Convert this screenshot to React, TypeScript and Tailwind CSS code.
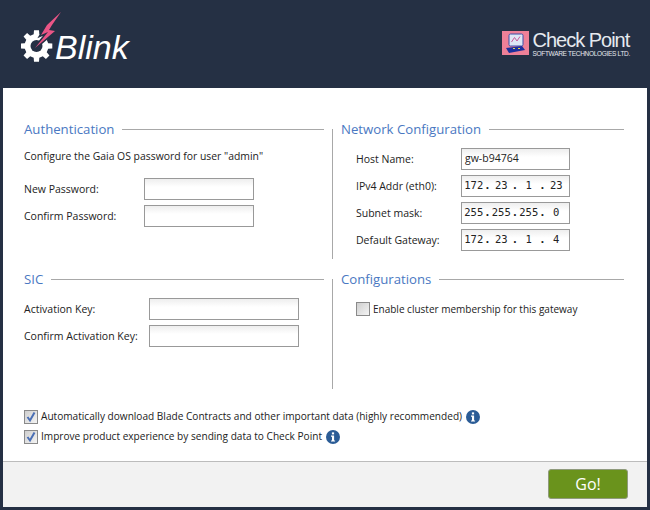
const ui = { fontFamily: '"Open Sans", "Noto Sans", sans-serif' };

function Title({ text }: { text: string }) {
  return (
    <div className="flex items-center gap-2 h-[18px]">
      <span className="text-[13.2px] leading-[18px] text-[#4a78c2] whitespace-nowrap">{text}</span>
      <div className="flex-1 h-px bg-[#a8a8a8]" />
    </div>
  );
}

const fieldClass =
  "h-[22px] border border-[#999999] bg-gradient-to-b from-[#eeeeee] to-[#ffffff] to-40%";

function Field({ label, w, lw }: { label: string; w: string; lw: string }) {
  return (
    <div className="flex items-center">
      <span className={`${lw} pt-[2px] text-[10.5px] text-[#222]`}>{label}</span>
      <div className={`${w} ${fieldClass}`} />
    </div>
  );
}

function Ip({ label, parts }: { label: string; parts: string[] }) {
  return (
    <div className="flex items-center">
      <span className="w-[105px] pt-[2px] text-[10.5px] text-[#222] whitespace-nowrap">{label}</span>
      <div className={`w-[109px] flex items-center ${fieldClass}`}>
        <div className="flex items-center -ml-[2px]">
          {parts.map((p, i) => (
            <div key={i} className="flex items-center text-[10.5px] shrink-0 text-[#222]" style={{ fontFamily: '"DejaVu Sans Mono", monospace' }}>
              <span className="w-[27.5px] text-center">{p}</span>
              {i < 3 && <span className="w-0 flex justify-center font-bold">.</span>}
            </div>
          ))}
        </div>
      </div>
    </div>
  );
}

function Check({ checked }: { checked?: boolean }) {
  return (
    <div className="w-[14px] h-[14px] border border-[#8a8a8a] bg-gradient-to-br from-[#cfcfcf] to-[#f4f4f4] flex items-center justify-center shrink-0">
      {checked && (
        <svg width="12" height="12" viewBox="0 0 12 12">
          <path d="M2.5 6 L5 9.5 L9.5 1.5" fill="none" stroke="#4a6fb5" strokeWidth="2" />
        </svg>
      )}
    </div>
  );
}

function Info() {
  return (
    <svg width="14" height="14" viewBox="0 0 14 14" className="shrink-0">
      <circle cx="7" cy="7" r="7" fill="#2b5c96" />
      <rect x="5.9" y="2.4" width="2.2" height="2" fill="#fff" />
      <path d="M5 5.6 H8.1 V10.4 H9.1 V11.5 H5 V10.4 H6 V6.7 H5 Z" fill="#fff" />
    </svg>
  );
}

function gearPath(cx: number, cy: number, rOut: number, rIn: number, teeth: number) {
  const pts: string[] = [];
  const step = (Math.PI * 2) / teeth;
  for (let i = 0; i < teeth; i++) {
    const a = i * step - Math.PI / 2;
    const d = step * 0.2;
    const d2 = step * 0.3;
    const list: [number, number][] = [
      [rIn, a - d2],
      [rOut, a - d],
      [rOut, a + d],
      [rIn, a + d2],
    ];
    for (const [r, t] of list) {
      pts.push(`${(cx + r * Math.cos(t)).toFixed(2)} ${(cy + r * Math.sin(t)).toFixed(2)}`);
    }
  }
  return `M${pts.join(" L")} Z`;
}

function BlinkLogo() {
  const bolt = "M40 12 L26 25 L20 35 L27 32 L14 48 L34 31 L28 30 L31 25 Z";
  return (
    <svg width="50" height="62" viewBox="0 0 50 62">
      <path d={gearPath(15.5, 46, 16, 12, 8)} fill="#fff" />
      <circle cx="15.5" cy="46" r="6" fill="#253044" />
      <path d={bolt} fill="#253044" stroke="#253044" strokeWidth="3" />
      <path d={bolt} fill="#ea5586" />
    </svg>
  );
}

function CheckPointLogo() {
  return (
    <div className="flex items-start gap-[3px]">
      <div className="w-[27px] h-[24px] bg-[#ee8098] flex items-center justify-center">
        <svg width="23" height="20" viewBox="0 0 23 20">
          <rect x="5" y="1" width="14" height="12" rx="1.5" fill="#dfe6f5" stroke="#3b4ea8" />
          <path d="M7.5 9 L10.5 4.5 L13 8 L16 3.5" stroke="#c85a9a" fill="none" />
          <path d="M2 15 L18 13 L21 17 L5 20 Z" fill="#1c2f9c" />
          <rect x="9" y="15" width="2" height="1" fill="#e8d44a" />
          <rect x="14" y="15" width="2" height="1" fill="#e8d44a" />
        </svg>
      </div>
      <div className="flex flex-col text-[#e6e9ef] -mt-[1px]" style={{ fontFamily: '"Liberation Sans", sans-serif' }}>
        <span className="text-[20px] leading-[20px] tracking-[-1px] whitespace-nowrap">Check Point</span>
        <span className="text-[6.5px] leading-[7px] tracking-[-0.3px] whitespace-nowrap">SOFTWARE TECHNOLOGIES LTD.</span>
      </div>
    </div>
  );
}

export default function App() {
  return (
    <div className="w-[650px] h-[510px] bg-[#253044] flex flex-col" style={ui}>
      <header className="h-[88px] shrink-0 flex justify-between pl-[21px] pr-[20px]">
        <div className="flex items-start">
          <BlinkLogo />
          <span className="-ml-[16px] mt-[26px] text-[34px] leading-[42px] italic text-white" style={{ fontFamily: '"Liberation Sans", sans-serif' }}>Blink</span>
        </div>
        <div className="pt-[31px]"><CheckPointLogo /></div>
      </header>
      <main className="mx-[3px] h-[419px] flex flex-col bg-white">
        <div className="flex-1 flex flex-col pt-[41px]">
          <div className="grid grid-cols-[329px_1fr] grid-rows-[130px_110px] gap-y-[20px]">
            <section className="pl-[21px] pr-[8px] -mt-[9px]">
              <Title text="Authentication" />
              <p className="mt-[10px] text-[10.4px] leading-[16px] text-[#222]">Configure the Gaia OS password for user "admin"</p>
              <div className="mt-[14px] flex flex-col gap-[5px]">
                <Field label="New Password:" lw="w-[120px]" w="w-[110px]" />
                <Field label="Confirm Password:" lw="w-[120px]" w="w-[110px]" />
              </div>
            </section>
            <section className="border-l border-[#a8a8a8] pl-[8px] pr-[23px]">
              <div className="-mt-[9px]"><Title text="Network Configuration" /></div>
              <div className="mt-[10px] pl-[15px] flex flex-col gap-[5px]">
                <div className="flex items-center">
                  <span className="w-[105px] pt-[2px] text-[10.5px] text-[#222]">Host Name:</span>
                  <div className={`w-[109px] flex items-center pl-[3px] text-[10.5px] text-[#222] ${fieldClass}`}>gw-b94764</div>
                </div>
                <Ip label="IPv4 Addr (eth0):" parts={["172", "23", "1", "23"]} />
                <Ip label="Subnet mask:" parts={["255", "255", "255", "0"]} />
                <Ip label="Default Gateway:" parts={["172", "23", "1", "4"]} />
              </div>
            </section>
            <section className="pl-[21px] pr-[8px] -mt-[9px]">
              <Title text="SIC" />
              <div className="mt-[10px] flex flex-col gap-[5px]">
                <Field label="Activation Key:" lw="w-[125px]" w="w-[150px]" />
                <Field label="Confirm Activation Key:" lw="w-[125px]" w="w-[150px]" />
              </div>
            </section>
            <section className="border-l border-[#a8a8a8] pl-[8px] pr-[23px]">
              <div className="-mt-[9px]"><Title text="Configurations" /></div>
              <div className="mt-[13px] pl-[15px] flex items-center gap-[3px]">
                <Check />
                <span className="text-[10px] pt-[1px] text-[#222]">Enable cluster membership for this gateway</span>
              </div>
            </section>
          </div>
          <div className="mt-[20px] pl-[21px] flex flex-col gap-[4px]">
            <div className="flex items-center gap-[3px] h-[16px]">
              <Check checked />
              <span className="text-[10.1px] text-[#222]">Automatically download Blade Contracts and other important data (highly recommended)</span>
              <span className="ml-[1px]"><Info /></span>
            </div>
            <div className="flex items-center gap-[3px] h-[16px]">
              <Check checked />
              <span className="text-[10.1px] text-[#222]">Improve product experience by sending data to Check Point</span>
              <span className="ml-[1px]"><Info /></span>
            </div>
          </div>
        </div>
        <footer className="h-[46px] shrink-0 border-t border-[#bcbcbc] bg-[#f2f2f2] flex justify-end items-start pt-[7px] pr-[19px]">
          <button className="w-[80px] h-[30px] rounded-[3px] border border-[#8f9a7c] bg-[#6a931c] text-white text-[16px]">Go!</button>
        </footer>
      </main>
    </div>
  );
}
